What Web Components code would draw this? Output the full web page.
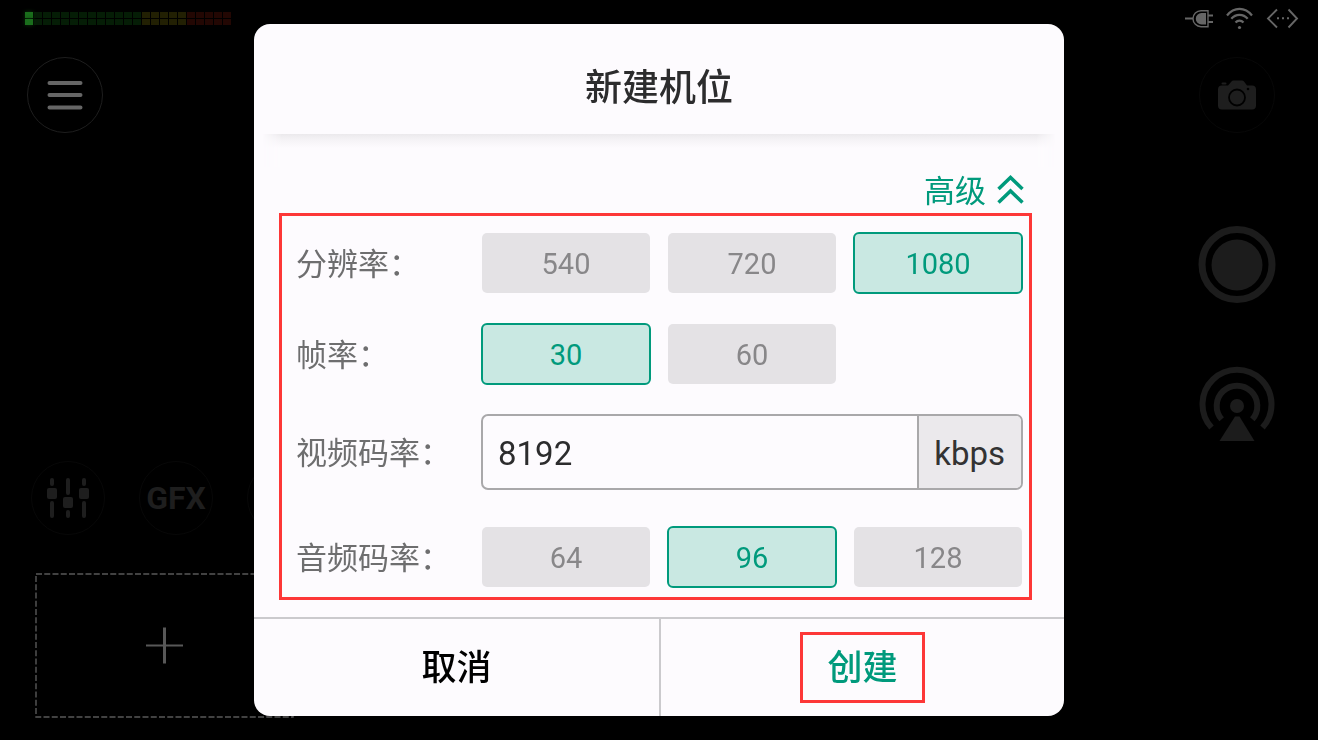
<!DOCTYPE html>
<html lang="zh-CN">
<head>
<meta charset="utf-8">
<meta name="viewport" content="width=device-width, initial-scale=1">
<title>新建机位</title>
<style>
  body {
    margin: 0;
    background: #000;
    font-family: Roboto, "Noto Sans CJK SC", sans-serif;
  }
</style>
</head>
<body>
<live-studio>
  <camera-dialog slot="dialog" heading="新建机位">
    <option-group label="分辨率：" name="resolution" options="540,720,1080" value="1080"></option-group>
    <option-group label="帧率：" name="fps" options="30,60" value="30"></option-group>
    <unit-field label="视频码率：" value="8192" unit="kbps"></unit-field>
    <option-group label="音频码率：" name="audio" options="64,96,128" value="96"></option-group>
  </camera-dialog>
</live-studio>

<script>
const rowStyle = `
  :host {
    display: block;
  }
  .row {
    display: grid;
    grid-template-columns: 185px 1fr;
    align-items: center;
  }
  .label {
    padding-top: 4px;
    font-size: 31px;
    line-height: 44px;
    color: #6e6e6f;
  }
`;

const render = (el, html) => {
  const template = document.createElement('template');
  template.innerHTML = html;
  el.attachShadow({ mode: 'open' }).appendChild(template.content.cloneNode(true));
};

class LevelMeter extends HTMLElement {
  static get is() {
    return 'level-meter';
  }

  connectedCallback() {
    const cells = Array.from({ length: 23 }, (_, i) => {
      const zone = i === 0 ? 'lit' : i < 13 ? 'low' : i < 18 ? 'mid' : 'high';
      return `<i class="${zone}"></i>`;
    }).join('');
    render(this, `
      <style>
        :host {
          display: grid;
          gap: 1px;
        }
        div {
          display: flex;
          gap: 1px;
        }
        i {
          width: 8px;
          height: 6px;
        }
        .lit { background: #1a6e1c; box-shadow: 0 0 4px #0b3a0c; }
        .low { background: #051d06; }
        .mid { background: #222003; }
        .high { background: #230703; }
      </style>
      <div>${cells}</div>
      <div>${cells}</div>
    `);
  }
}

class RoundButton extends HTMLElement {
  static get is() {
    return 'round-button';
  }

  connectedCallback() {
    render(this, `
      <style>
        :host {
          display: block;
        }
        button {
          display: grid;
          place-items: center;
          box-sizing: border-box;
          width: var(--size, 76px);
          height: var(--size, 76px);
          padding: 0;
          border: var(--ring, 1px solid #080808);
          border-radius: 50%;
          background: none;
          color: #1e1e1e;
          font: bold 32px/40px Roboto, sans-serif;
        }
      </style>
      <button type="button" aria-label="${this.getAttribute('label')}"><slot></slot></button>
    `);
  }
}

class LiveStudio extends HTMLElement {
  static get is() {
    return 'live-studio';
  }

  connectedCallback() {
    render(this, `
      <style>
        :host {
          display: flex;
          flex-direction: column;
          min-height: 100vh;
          overflow: hidden;
          background: #000;
        }
        svg {
          display: block;
        }
        header {
          display: flex;
          justify-content: space-between;
          align-items: flex-start;
          box-sizing: border-box;
          height: 57px;
          padding: 7px 18px 0 25px;
        }
        level-meter {
          margin-top: 5px;
        }
        .status {
          display: flex;
          gap: 13px;
          color: #666;
        }
        main {
          flex: 1;
          display: flex;
          justify-content: space-between;
          padding: 0 42px 22px 27px;
        }
        .left {
          display: flex;
          flex-direction: column;
          justify-content: space-between;
          align-items: flex-start;
        }
        .tools {
          --size: 74px;
          display: flex;
          gap: 34px;
          padding: 0 0 38px 4px;
        }
        .menu {
          --ring: 1px solid #1e1e1e;
        }
        .tile {
          display: block;
          margin-left: 8px;
          padding: 0;
          border: 0;
          background: none;
        }
        .right {
          display: flex;
          flex-direction: column;
          align-items: center;
          gap: 62px;
        }
        .plain {
          --ring: 0;
          --size: 78px;
        }
        .camera {
          margin-bottom: 31px;
        }
        .overlay {
          position: fixed;
          inset: 0;
          display: grid;
          grid-template-columns: minmax(0, 810px);
          place-content: center;
        }
      </style>
      <header>
        <level-meter></level-meter>
        <div class="status">
          <svg width="30" height="24" viewBox="0 0 30 24" fill="none" stroke="currentColor" stroke-width="1.4">
            <path d="M2 11.500H10M25 8.500H30M25 15H30" stroke-width="1.8"/>
            <path d="M25 3.700H18a8 8 0 0 0 0 16h7z"/>
            <path d="M23 6H18.500a5.700 5.700 0 0 0 0 11.400H23z" fill="currentColor" stroke="none"/>
          </svg>
          <svg width="27" height="24" viewBox="0 0 27 24" fill="none" stroke="currentColor" stroke-width="2.200">
            <path d="M1 8.500C8-.3 19 -.3 26 8.500M5.300 11.800C9.700 6.500 17.300 6.500 21.700 11.800M9.500 15.500C11.800 13 15.200 13 17.500 15.500"/>
            <circle cx="13.500" cy="20.500" r="1.600" fill="currentColor" stroke="none"/>
          </svg>
          <svg width="34" height="24" viewBox="0 0 34 24" fill="none" stroke="currentColor" stroke-width="1.900">
            <path d="M11 2.500L2 11.500L11 20.500M22.500 2.500L31 11.500L22.500 20.500"/>
            <path d="M11 11.200h2M16 11.200h2M21 11.200h2"/>
          </svg>
        </div>
      </header>
      <main>
        <div class="left">
          <round-button class="menu" label="菜单">
            <svg width="38" height="32" viewBox="0 0 38 32" stroke="#666" stroke-width="4" stroke-linecap="round">
              <path d="M3.500 4h31M3.500 16h31M3.500 28.500h31"/>
            </svg>
          </round-button>
          <div>
            <div class="tools">
              <round-button label="调音台">
                <svg width="42" height="40" viewBox="0 0 42 40" fill="#1e1e1e">
                  <rect x="3" y="0" width="4" height="8" rx="2"/>
                  <rect x="0" y="10" width="10" height="11" rx="2"/>
                  <rect x="3" y="23" width="4" height="17" rx="2"/>
                  <rect x="19" y="0" width="4" height="17" rx="2"/>
                  <rect x="16" y="19" width="10" height="11" rx="2"/>
                  <rect x="19" y="32" width="4" height="8" rx="2"/>
                  <rect x="35" y="0" width="4" height="8" rx="2"/>
                  <rect x="32" y="10" width="10" height="11" rx="2"/>
                  <rect x="35" y="23" width="4" height="17" rx="2"/>
                </svg>
              </round-button>
              <round-button label="GFX">GFX</round-button>
              <round-button label="更多"></round-button>
            </div>
            <button class="tile" type="button" aria-label="添加机位">
              <svg width="259" height="145" viewBox="0 0 259 145" fill="none" stroke="#585858">
                <rect x="1" y="1" width="257" height="143" stroke-width="1.400" stroke-dasharray="6 2.250"/>
                <path d="M111 72.500h37" stroke-width="2.200"/>
                <path d="M129.500 54.500v36" stroke-width="3"/>
              </svg>
            </button>
          </div>
        </div>
        <div class="right">
          <round-button class="camera" label="拍照">
            <svg width="38" height="30" viewBox="0 0 38 30">
              <path d="M4 5.500H10L13.500 1.500Q14.200.5 15.500.5H24Q25.200.5 26 1.500L29 5.500H34Q38 5.500 38 9.500V25.500Q38 29.500 34 29.500H4Q0 29.500 0 25.500V9.500Q0 5.500 4 5.500z" fill="#1e1e1e"/>
              <rect x="3.500" y="2.500" width="5" height="2" rx="1" fill="#1e1e1e"/>
              <circle cx="19" cy="17.500" r="8" fill="#1e1e1e" stroke="#000" stroke-width="1.800"/>
              <circle cx="30" cy="9" r="1.300"/>
            </svg>
          </round-button>
          <round-button class="plain" label="录制">
            <svg width="78" height="78" viewBox="0 0 78 78" fill="#1c1c1c">
              <circle cx="39" cy="38.500" r="35" fill="none" stroke="#1c1c1c" stroke-width="7"/>
              <circle cx="39" cy="39" r="25.500"/>
            </svg>
          </round-button>
          <round-button class="plain" label="直播">
            <svg width="78" height="78" viewBox="0 0 78 78" fill="#1c1c1c">
              <g fill="none" stroke="#1c1c1c" stroke-width="6">
                <path d="M13.500 61.500A34.500 34.500 0 1 1 64.500 61.500"/>
                <path d="M23.700 53.300A20.300 20.300 0 1 1 54.300 53.300"/>
              </g>
              <circle cx="39" cy="40" r="7"/>
              <path d="M37 50.500h4.500L56.500 75h-35z"/>
            </svg>
          </round-button>
        </div>
      </main>
      <div class="overlay"><slot name="dialog"></slot></div>
    `);
  }
}

class CameraDialog extends HTMLElement {
  static get is() {
    return 'camera-dialog';
  }

  connectedCallback() {
    render(this, `
      <style>
        :host {
          display: block;
          overflow: hidden;
          border-radius: 16px;
          background: #fdfbfe;
          --accent: #009a7c;
          --mark: #fd3737;
        }
        h1 {
          margin: 0;
          padding: 37px 0 17px;
          font-size: 37px;
          font-weight: 500;
          line-height: 56px;
          text-align: center;
          color: #2c2c2d;
        }
        .shade {
          height: 33px;
          margin: 0 8px;
          background: linear-gradient(#ebe9ec, #f5f3f6 6px, #fdfbfe 14px);
          mask: linear-gradient(90deg, transparent, #000 20px calc(100% - 20px), transparent);
        }
        .toggle {
          display: flex;
          align-items: center;
          gap: 11px;
          height: 44px;
          margin: 0 40px 2px auto;
          padding: 0;
          border: 0;
          background: none;
          color: var(--accent);
          font: 31px/44px "Noto Sans CJK SC", sans-serif;
        }
        .settings {
          display: grid;
          gap: 29px;
          margin: 0 32px 17px 25px;
          padding: 16px 6px 9px 14px;
          border: 3px solid var(--mark);
        }
        footer {
          display: grid;
          grid-template-columns: 1fr 1fr;
          border-top: 2px solid #cbcacd;
        }
        footer button {
          display: grid;
          place-items: center;
          height: 97px;
          padding: 0;
          border: 0;
          background: none;
          color: #000;
          font: 500 35px/52px "Noto Sans CJK SC", sans-serif;
        }
        footer button + button {
          border-left: 2px solid #cbcacd;
          color: var(--accent);
        }
        footer span {
          padding: 4px 24px 9px;
          border: 3px solid transparent;
        }
        .mark {
          border-color: var(--mark);
        }
      </style>
      <section role="dialog" aria-labelledby="heading">
        <h1 id="heading">${this.getAttribute('heading')}</h1>
        <div class="shade"></div>
        <button class="toggle" type="button" aria-expanded="true">
          高级
          <svg width="27" height="30" viewBox="0 0 27 30" fill="none" stroke="currentColor" stroke-width="3.500">
            <path d="M1.500 15L13.500 3.500L25.500 15M1.500 28.500L13.500 17L25.500 28.500"/>
          </svg>
        </button>
        <div class="settings"><slot></slot></div>
        <footer>
          <button type="button"><span>取消</span></button>
          <button type="button"><span class="mark">创建</span></button>
        </footer>
      </section>
    `);
  }
}

class OptionGroup extends HTMLElement {
  static get is() {
    return 'option-group';
  }

  connectedCallback() {
    const name = this.getAttribute('name');
    const value = this.getAttribute('value');
    const options = this.getAttribute('options').split(',');
    render(this, `
      <style>
        ${rowStyle}
        .options {
          display: grid;
          grid-template-columns: repeat(3, 1fr);
          gap: 16px;
        }
        .option {
          position: relative;
          box-sizing: border-box;
          height: 62px;
          border: 1px solid transparent;
          border-radius: 6px;
          background: #e4e2e5 padding-box;
          color: #888789;
          font-size: 29px;
          line-height: 62px;
          text-align: center;
        }
        .option:has(:checked) {
          border: 2px solid var(--accent);
          background: #c9e8e2;
          color: var(--accent);
          line-height: 60px;
        }
        input {
          position: absolute;
          inset: 0;
          margin: 0;
          appearance: none;
        }
      </style>
      <div class="row" role="radiogroup" aria-labelledby="label">
        <span class="label" id="label">${this.getAttribute('label')}</span>
        <div class="options">
          ${options.map((option) => `
            <label class="option">
              <input type="radio" name="${name}" value="${option}" ${option === value ? 'checked' : ''}>${option}
            </label>
          `).join('')}
        </div>
      </div>
    `);
  }
}

class UnitField extends HTMLElement {
  static get is() {
    return 'unit-field';
  }

  connectedCallback() {
    render(this, `
      <style>
        ${rowStyle}
        :host {
          margin-bottom: 7px;
        }
        .field {
          display: flex;
          overflow: hidden;
          border: 2px solid #a9a8aa;
          border-radius: 7px;
        }
        input {
          flex: 1;
          min-width: 0;
          height: 72px;
          box-sizing: border-box;
          padding: 2px 15px 0;
          border: 0;
          outline: 0;
          background: none;
          color: #2c2c2d;
          font: 33px Roboto, sans-serif;
        }
        .unit {
          padding: 0 16px 0 15px;
          border-left: 2px solid #a9a8aa;
          background: #ebe9ec;
          color: #333;
          font-size: 33px;
          line-height: 76px;
          height: 72px;
        }
      </style>
      <div class="row">
        <label class="label" for="value">${this.getAttribute('label')}</label>
        <div class="field">
          <input id="value" type="text" inputmode="numeric" value="${this.getAttribute('value')}">
          <span class="unit">${this.getAttribute('unit')}</span>
        </div>
      </div>
    `);
  }
}

[LevelMeter, RoundButton, LiveStudio, CameraDialog, OptionGroup, UnitField].forEach((element) => {
  customElements.define(element.is, element);
});
</script>
</body>
</html>
